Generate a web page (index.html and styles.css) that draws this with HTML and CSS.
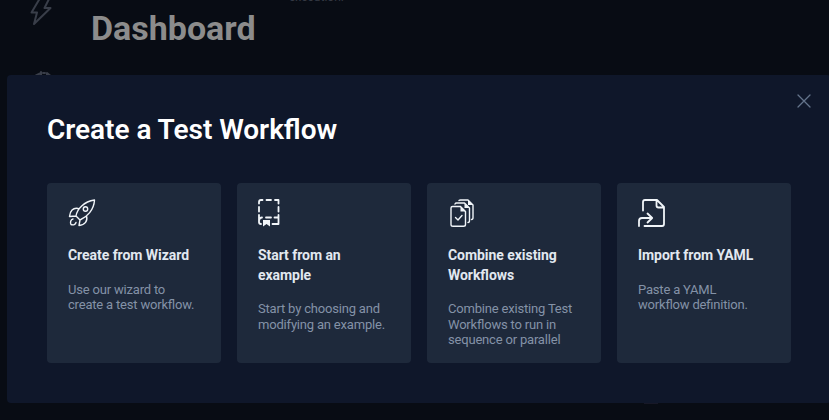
FILE: index.html
```html
<!DOCTYPE html>
<html lang="en">
<head>
<meta charset="utf-8">
<title>Dashboard</title>
<link rel="stylesheet" href="styles.css">
</head>
<body>
<div class="page">
  <nav class="rail">
    <svg class="bolt" width="24" height="28" viewBox="0 0 24 28"><path d="M10.500 0H20l-4.500 9H21.500L5 25l3-11.500H2.500z"/></svg>
    <svg class="gauge" width="20" height="20" viewBox="0 0 20 20"><path d="M3 4.500L7 2.500M8 1v7M10 2h2M14 8V2l3 2.500"/></svg>
  </nav>
  <main class="content">
    <h1>Dashboard</h1>
    <span class="hint">execution.</span>
  </main>
  <span class="trace"></span>
</div>
<section class="modal" role="dialog" aria-labelledby="modal-title">
  <button class="close" aria-label="Close"><svg width="14" height="14" viewBox="0 0 14 14"><path d="M1 1l12 12M13 1L1 13"/></svg></button>
  <h2 id="modal-title">Create a Test Workflow</h2>
  <div class="cards">
    <article class="card">
      <svg class="icon" width="28" height="28" viewBox="0 0 28 28"><path d="M8 17C9 10 16 2.500 26.500 1C26 11 19 18 12 21zM10 9.500C5 8.500 2 12 1.500 17.500L8 17M18.500 17C20 22 17 26 11 26.500L12 21"/><circle cx="17.500" cy="10" r="2.200"/><path d="M5 20C2.500 20.500 2 23.500 3 25.500C5.500 26.500 7.500 25.500 8 23.500"/></svg>
      <h3>Create from Wizard</h3>
      <p>Use our wizard to<br>create a test workflow.</p>
    </article>
    <article class="card">
      <svg class="icon bold" width="28" height="28" viewBox="0 0 28 28"><path d="M1 4.500V3Q1 1 3 1h1.500M8.500 1h4.500M17 1h3.500v3.500M20.500 8v4.500M20.500 16V25H14.500M1 8v4.500M1 16V23Q1 25 3 25M1 21.500Q1.500 18.500 4 18.500M8 18.500h5M16.500 18.500h4"/><path class="solid" d="M5 21h7v6.500l-3.500-2.500L5 27.500z"/></svg>
      <h3>Start from an<br>example</h3>
      <p>Start by choosing and<br>modifying an example.</p>
    </article>
    <article class="card">
      <svg class="icon" width="28" height="28" viewBox="0 0 28 28"><path d="M3 9Q3 7.500 4.500 7.500H12.500l5 5V25.500Q17.500 27.300 15.500 27.300H5Q3 27.300 3 25.500zM7 5Q7.500 4 8.500 4H16.500l5 5V21.500Q21.500 23.500 20 23.500M11 1.500Q11.500 1 12.500 1H20l5 5V18.500Q25 20.500 23.500 20.500M7.500 18.500l2.500 2.500 4-4.500"/><path class="solid" d="M12.500 7.500v5h5zM16.500 4v5h5zM20 1v5h5z"/></svg>
      <h3>Combine existing<br>Workflows</h3>
      <p>Combine existing Test<br>Workflows to run in<br>sequence or parallel</p>
    </article>
    <article class="card">
      <svg class="icon bold" width="28" height="28" viewBox="0 0 28 28"><path d="M5 11.500V3Q5 1 7 1H19l7 7V25Q26 27 24 27H6.500M18.500 1V6.500Q18.500 8.500 20.500 8.500H26M1 27V22Q1 19 4 19H14M9.500 14.500l4.700 4.500-4.700 4.500"/></svg>
      <h3>Import from YAML</h3>
      <p>Paste a YAML<br>workflow definition.</p>
    </article>
  </div>
</section>
</body>
</html>
```
FILE: styles.css
```css
* { box-sizing: border-box; }
body {
  margin: 0;
  height: 420px;
  overflow: hidden;
  background: #080c14;
  font-family: Roboto, sans-serif;
  font-feature-settings: "liga" 1;
}
svg { display: block; fill: none; stroke-linecap: round; stroke-linejoin: round; }
h1, h2, h3, p { margin: 0; }
.page { position: relative; display: flex; height: 420px; }
.rail {
  width: 80px;
  padding-left: 29px;
  stroke: #393e49;
  stroke-width: 2;
}
.bolt { margin-top: -1px; }
.gauge { margin: 44px 0 0 4px; }
.content { position: relative; flex: 1; padding: 7px 0 0 11px; }
h1 { font-size: 34px; line-height: 42px; font-weight: 700; color: #8c8c8c; }
.hint {
  position: absolute;
  left: 209px;
  top: -10px;
  font-size: 12px;
  line-height: 14px;
  color: #343943;
}
.trace {
  position: absolute;
  left: 644px;
  top: 402px;
  width: 14px;
  height: 2px;
  background: #171827;
}
.modal {
  position: absolute;
  left: 7px;
  top: 75px;
  width: 824px;
  height: 328px;
  padding: 37px 40px 40px;
  border-radius: 4px;
  background: #0f172a;
}
.close {
  position: absolute;
  right: 20px;
  top: 19px;
  padding: 0;
  border: 0;
  background: none;
  stroke: #64748b;
  stroke-width: 1.3;
}
h2 {
  font-size: 28px;
  line-height: 36px;
  font-weight: 600;
  letter-spacing: -0.04px;
  color: #fff;
}
.cards {
  display: grid;
  grid-template-columns: repeat(4, 174px);
  gap: 16px;
  margin-top: 35px;
}
.card {
  height: 180px;
  padding: 16px 0 0 21px;
  border-radius: 4px;
  background: #1e293b;
}
.icon { stroke: #f1f5f9; stroke-width: 1.4; }
.bold { stroke-width: 1.8; }
.solid { fill: #f1f5f9; stroke: none; }
h3 {
  margin-top: 19.1px;
  font-size: 14px;
  line-height: 19.6px;
  font-weight: 700;
  letter-spacing: -0.05px;
  color: #e2e8f0;
}
.card p {
  margin-top: 16px;
  font-size: 13px;
  line-height: 15.6px;
  letter-spacing: -0.19px;
  color: #8492a7;
}
```
